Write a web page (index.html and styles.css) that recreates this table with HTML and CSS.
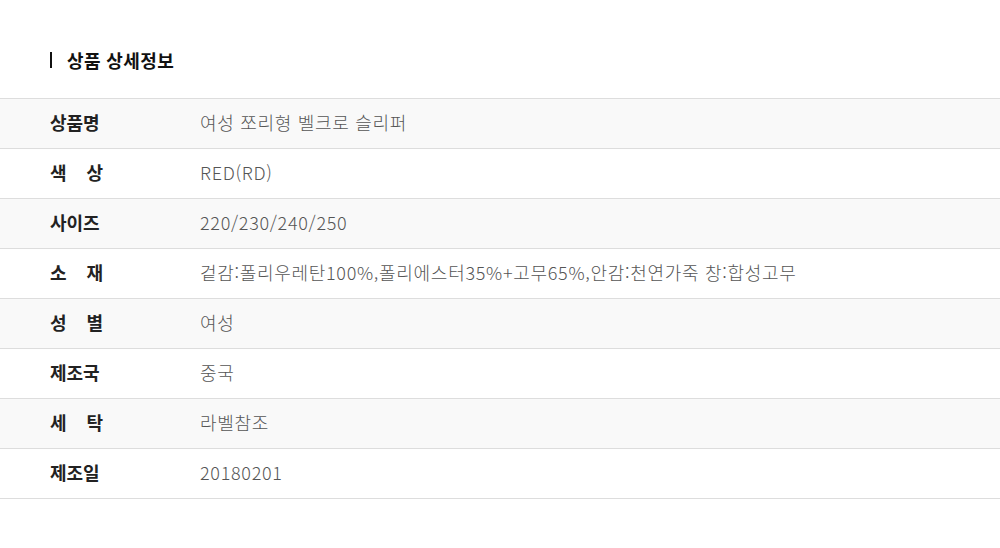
FILE: index.html
```html
<!DOCTYPE html>
<html lang="ko">
<head>
<meta charset="UTF-8">
<title>상품 상세정보</title>
<link rel="stylesheet" href="styles.css">
</head>
<body>
<div class="detail">
    <h2 class="detail-title">상품 상세정보</h2>
    <table class="detail-table">
        <tr><th><span class="label">상품명</span></th><td>여성 쪼리형 벨크로 슬리퍼</td></tr>
        <tr><th><span class="label">색 상</span></th><td>RED(RD)</td></tr>
        <tr><th><span class="label">사이즈</span></th><td>220/230/240/250</td></tr>
        <tr><th><span class="label">소 재</span></th><td>겉감:폴리우레탄100%,폴리에스터35%+고무65%,안감:천연가죽 창:합성고무</td></tr>
        <tr><th><span class="label">성 별</span></th><td>여성</td></tr>
        <tr><th><span class="label">제조국</span></th><td>중국</td></tr>
        <tr><th><span class="label">세 탁</span></th><td>라벨참조</td></tr>
        <tr><th><span class="label">제조일</span></th><td>20180201</td></tr>
    </table>
</div>
</body>
</html>
```
FILE: styles.css
```css
body {
    margin: 0;
    background-color: #fff;
    font-family: "Noto Sans CJK KR", "Noto Sans", sans-serif;
    color: #222;
}
.detail {
    padding-top: 47px;
}
.detail-title {
    display: flex;
    align-items: center;
    margin: 0 0 25px 50px;
    font-size: 18px;
    font-weight: 700;
    line-height: 26px;
    letter-spacing: 0.4px;
    color: #111;
}
.detail-title::before {
    content: "";
    width: 2px;
    height: 16px;
    margin-right: 15px;
    background-color: #111;
}
.detail-table {
    width: 100%;
    border-collapse: collapse;
    border-top: 1px solid #ddd;
}
.detail-table tr {
    border-bottom: 1px solid #ddd;
}
.detail-table tr:nth-child(odd) {
    background-color: #f9f9f9;
}
.detail-table th,
.detail-table td {
    height: 46px;
    padding: 0 0 3px;
    font-size: 18px;
    text-align: left;
    vertical-align: middle;
}
.detail-table th {
    width: 150px;
    padding-left: 50px;
    font-weight: 700;
    color: #222;
}
.label {
    display: inline-block;
    width: 53px;
    text-align: justify;
    text-align-last: justify;
}
.detail-table td {
    font-weight: 300;
    color: #555;
    letter-spacing: 0.7px;
}
```
